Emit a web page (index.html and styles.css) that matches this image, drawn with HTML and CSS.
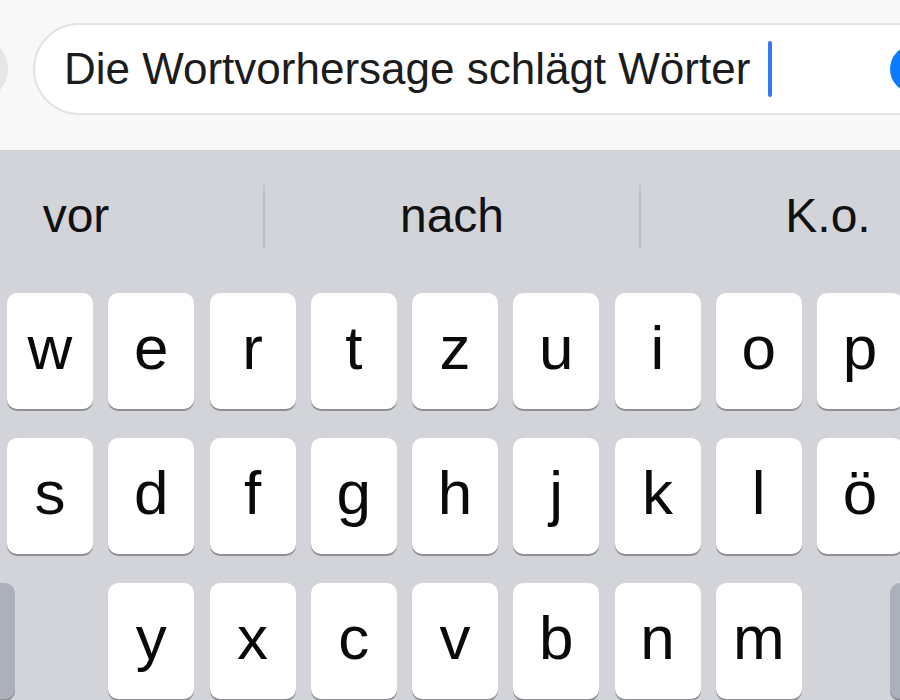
FILE: index.html
```html
<!DOCTYPE html>
<html lang="de">
<head>
<meta charset="utf-8">
<title>Tastatur</title>
<link rel="stylesheet" href="styles.css">
</head>
<body>
<div class="screen">
  <div class="top">
    <div class="side-btn"></div>
    <div class="field">
      <span class="field-text">Die Wortvorhersage schlägt Wörter</span>
      <span class="cursor"></span>
      <span class="send"></span>
    </div>
  </div>
  <div class="keyboard">
    <div class="suggestions">
      <div class="sugg">vor</div>
      <div class="sep"></div>
      <div class="sugg">nach</div>
      <div class="sep"></div>
      <div class="sugg">K.o.</div>
    </div>
    <div class="rows">
      <div class="row">
        <div class="key">w</div><div class="key">e</div><div class="key">r</div><div class="key">t</div><div class="key">z</div><div class="key">u</div><div class="key">i</div><div class="key">o</div><div class="key">p</div>
      </div>
      <div class="row">
        <div class="key">s</div><div class="key">d</div><div class="key">f</div><div class="key">g</div><div class="key">h</div><div class="key">j</div><div class="key">k</div><div class="key">l</div><div class="key">ö</div>
      </div>
      <div class="row">
        <div class="key key-fn key-shift"></div>
        <div class="key">y</div><div class="key">x</div><div class="key">c</div><div class="key">v</div><div class="key">b</div><div class="key">n</div><div class="key">m</div>
        <div class="key key-fn key-del"></div>
      </div>
    </div>
  </div>
</div>
</body>
</html>
```

FILE: styles.css
```css
html, body {
  margin: 0;
  padding: 0;
}
body {
  width: 900px;
  height: 700px;
  overflow: hidden;
  font-family: "Liberation Sans", Arial, sans-serif;
  color: #111;
}
.screen {
  width: 900px;
  height: 700px;
  overflow: hidden;
  display: flex;
  flex-direction: column;
}
.top {
  height: 150px;
  flex: none;
  background: #f8f8f8;
  display: flex;
  align-items: flex-start;
  padding-top: 23px;
  box-sizing: border-box;
}
.side-btn {
  flex: none;
  width: 64px;
  height: 64px;
  margin-left: -56px;
  margin-top: 14px;
  border-radius: 50%;
  background: #e6e6e9;
}
.field {
  flex: none;
  width: 920px;
  height: 92px;
  margin-left: 25px;
  box-sizing: border-box;
  border: 2px solid #e3e3e6;
  border-radius: 46px;
  background: #fff;
  display: flex;
  align-items: center;
  padding-left: 29px;
  padding-right: 13px;
}
.field-text {
  font-size: 44px;
  color: #1c1c1c;
  white-space: nowrap;
}
.cursor {
  flex: none;
  width: 4px;
  height: 56px;
  margin-left: 18px;
  background: #3478f6;
  border-radius: 2px;
}
.send {
  flex: none;
  width: 48px;
  height: 48px;
  margin-left: auto;
  border-radius: 50%;
  background: #0a7aff;
}
.keyboard {
  flex: 1;
  background: #d2d4d9;
  display: flex;
  flex-direction: column;
}
.suggestions {
  height: 133px;
  flex: none;
  display: flex;
  align-items: center;
  margin-left: -112px;
}
.sugg {
  flex: none;
  width: 376px;
  text-align: center;
  font-size: 48px;
  color: #111;
  padding-bottom: 2px;
}
.sep {
  flex: none;
  width: 2px;
  height: 63px;
  margin: 0 -1px;
  background: #bdbfc4;
}
.rows {
  display: flex;
  flex-direction: column;
  gap: 29px;
  padding-top: 10px;
  padding-left: 7px;
}
.row {
  display: flex;
  gap: 15.25px;
}
.key {
  flex: none;
  width: 86px;
  height: 116px;
  box-sizing: border-box;
  background: #fff;
  border-radius: 10px;
  box-shadow: 0 2px 0 #8e9096;
  display: flex;
  align-items: center;
  justify-content: center;
  font-size: 62px;
  color: #0a0a0a;
  padding-bottom: 8px;
}
.key-fn {
  background: #abb0ba;
}
.key-shift {
  margin-left: -78px;
  margin-right: 78px;
}
.key-del {
  margin-left: 73px;
}
```
